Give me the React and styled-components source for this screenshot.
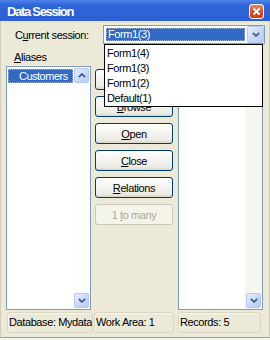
import React from 'react'
import styled, { createGlobalStyle } from 'styled-components'

const GlobalStyle = createGlobalStyle`
html, body {
  margin: 0;
  padding: 0;
  background: #ece9d8;
}
body {
  font-family: 'Liberation Sans', Arial, sans-serif;
  font-size: 11px;
  color: #000;
}
`

const Window = styled.div`
width: 270px;
height: 340px;
box-sizing: border-box;
display: flex;
flex-direction: column;
background: #ece9d8;
box-shadow: inset 0 -2px 0 #f4f3ee, inset 0 -3px 0 #a5a290, inset 1px 0 0 #cfccba, inset -1px 0 0 #cfccba;
overflow: hidden;
`

const TitleBar = styled.div`
height: 21px;
flex: none;
display: flex;
align-items: center;
justify-content: space-between;
padding: 0 6px 0 7px;
background: linear-gradient(180deg, #4f82ea 0%, #2f64d6 25%, #2b5fd2 100%);
`

const Title = styled.span`
color: #fff;
font-weight: bold;
font-size: 13px;
letter-spacing: -1.3px;
margin-top: 1px;
`

const CloseBtn = styled.div`
width: 15px;
height: 15px;
box-sizing: border-box;
border: 1px solid #fff;
border-radius: 3px;
background: linear-gradient(180deg, #e98a6a 0%, #dc5530 45%, #c8401c 100%);
display: flex;
align-items: center;
justify-content: center;
margin-top: 1px;
`

const Body = styled.div`
flex: 1;
display: flex;
flex-direction: column;
padding: 0 7px 7px 6px;
`

const SessionRow = styled.div`
display: flex;
align-items: center;
height: 19px;
margin-top: 4px;
`

const FieldLabel = styled.div`
width: 97px;
box-sizing: border-box;
padding-left: 9px;
letter-spacing: -0.4px;
`

const Combo = styled.div`
position: relative;
flex: 1;
margin-right: -2px;
height: 19px;
box-sizing: border-box;
border: 1px solid #7f9db9;
background: #fff;
display: flex;
align-items: center;
`

const ComboValue = styled.div`
flex: 1;
height: 13px;
margin: 0 2px 0 2px;
padding-left: 2px;
background: #316ac5;
color: #fff;
line-height: 13px;
letter-spacing: -0.4px;
outline: 1px dotted #9db6e6;
outline-offset: -1px;
`

const ArrowBtn = styled.div`
width: ${p => p.$size}px;
height: ${p => p.$size}px;
box-sizing: border-box;
flex: none;
border: 1px solid #b7c8f3;
border-radius: 2px;
background: linear-gradient(135deg, #e6edfd 0%, #c9d7fa 55%, #b9cbf6 100%);
display: flex;
align-items: center;
justify-content: center;
`

const DropList = styled.div`
position: absolute;
z-index: 10;
top: calc(100% + 1px);
left: 0;
width: 159px;
box-sizing: border-box;
border: 1px solid #000;
background: #fff;
padding-top: 1px;
height: 63px;
`

const DropItem = styled.div`
height: 15px;
line-height: 15px;
padding-left: 2px;
letter-spacing: -0.4px;
`

const Main = styled.div`
display: flex;
height: 262px;
margin-top: 4px;
`

const ListColumn = styled.div`
width: 85px;
display: flex;
flex-direction: column;
flex: none;
`

const ListLabel = styled.div`
height: 18px;
line-height: 18px;
padding-left: 8px;
letter-spacing: -0.4px;
`

const ListBox = styled.div`
flex: 1;
display: flex;
box-sizing: border-box;
border: 1px solid #7f9db9;
background: #fff;
`

const Items = styled.div`
flex: 1;
`

const Item = styled.div`
height: 14px;
line-height: 14px;
margin: 2px 0 0 1px;
padding-left: 11px;
background: #316ac5;
color: #fff;
letter-spacing: -0.5px;
outline: 1px dotted #9db6e6;
outline-offset: -1px;
`

const ScrollBar = styled.div`
width: 17px;
box-sizing: border-box;
padding: 1px;
display: flex;
flex-direction: column;
justify-content: space-between;
background: ${p => (p.$shade ? '#f6f5f0' : '#fdfdfb')};
`

const ButtonColumn = styled.div`
width: 78px;
flex: none;
margin: 0 5px 0 4px;
padding-top: 21px;
display: flex;
flex-direction: column;
gap: 6px;
`

const Button = styled.div`
height: 21px;
box-sizing: border-box;
border: 1px solid ${p => (p.$disabled ? '#cac8bb' : '#003c74')};
border-radius: 3px;
background: ${p =>
  p.$disabled
    ? '#f5f4ea'
    : 'linear-gradient(180deg, #ffffff 0%, #f6f5f1 40%, #ebeae3 85%, #d8d5c8 100%)'};
color: ${p => (p.$disabled ? '#aca899' : '#000')};
display: flex;
align-items: center;
justify-content: center;
letter-spacing: -0.4px;
`

const StatusBar = styled.div`
display: flex;
margin-top: 2px;
height: 21px;
`

const StatusPanel = styled.div`
width: ${p => p.$w}px;
margin-left: ${p => p.$ml}px;
box-sizing: border-box;
border: 1px solid #d9d5c5;
border-radius: 3px;
box-shadow: inset 1px 1px 0 #f7f6f1;
white-space: nowrap;
overflow: hidden;
line-height: 19px;
padding-left: 1px;
letter-spacing: -0.4px;
`

const Chevron = ({ up }) => (
  <svg width="8" height="5" viewBox="0 0 8 5">
    <path
      d={up ? 'M0.8 4.2 L4 1 L7.2 4.2' : 'M0.8 0.8 L4 4 L7.2 0.8'}
      fill="none"
      stroke="#4d6185"
      strokeWidth="1.8"
    />
  </svg>
)

const CloseX = () => (
  <svg width="9" height="9" viewBox="0 0 9 9">
    <path d="M1.5 1.5 L7.5 7.5 M7.5 1.5 L1.5 7.5" stroke="#fff" strokeWidth="1.8" />
  </svg>
)

const sessions = ['Form1(4)', 'Form1(3)', 'Form1(2)', 'Default(1)']

const App = () => {
  return (
    <Window>
      <GlobalStyle />
      <TitleBar>
        <Title>Data Session</Title>
        <CloseBtn>
          <CloseX />
        </CloseBtn>
      </TitleBar>
      <Body>
        <SessionRow>
          <FieldLabel>
            C<u>u</u>rrent session:
          </FieldLabel>
          <Combo>
            <ComboValue>Form1(3)</ComboValue>
            <ArrowBtn $size={17}>
              <Chevron />
            </ArrowBtn>
            <DropList>
              {sessions.map(s => (
                <DropItem key={s}>{s}</DropItem>
              ))}
            </DropList>
          </Combo>
        </SessionRow>

        <Main>
          <ListColumn>
            <ListLabel>
              <u>A</u>liases
            </ListLabel>
            <ListBox>
              <Items>
                <Item>Customers</Item>
              </Items>
              <ScrollBar>
                <ArrowBtn $size={15}>
                  <Chevron up />
                </ArrowBtn>
                <ArrowBtn $size={15}>
                  <Chevron />
                </ArrowBtn>
              </ScrollBar>
            </ListBox>
          </ListColumn>

          <ButtonColumn>
            <Button>
              <u>P</u>roperties
            </Button>
            <Button>
              <u>B</u>rowse
            </Button>
            <Button>
              <u>O</u>pen
            </Button>
            <Button>
              <u>C</u>lose
            </Button>
            <Button>
              <u>R</u>elations
            </Button>
            <Button $disabled>
              1&nbsp;<u>t</u>o many
            </Button>
          </ButtonColumn>

          <ListColumn>
            <ListLabel>Relationships</ListLabel>
            <ListBox>
              <Items />
              <ScrollBar $shade>
                <ArrowBtn $size={15}>
                  <Chevron up />
                </ArrowBtn>
                <ArrowBtn $size={15}>
                  <Chevron />
                </ArrowBtn>
              </ScrollBar>
            </ListBox>
          </ListColumn>
        </Main>

        <StatusBar>
          <StatusPanel $w={86} $ml={1}>Database: Mydata</StatusPanel>
          <StatusPanel $w={80} $ml={1}>Work Area: 1</StatusPanel>
          <StatusPanel $w={83} $ml={4}>Records: 5</StatusPanel>
        </StatusBar>
      </Body>
    </Window>
  )
}

export default App
